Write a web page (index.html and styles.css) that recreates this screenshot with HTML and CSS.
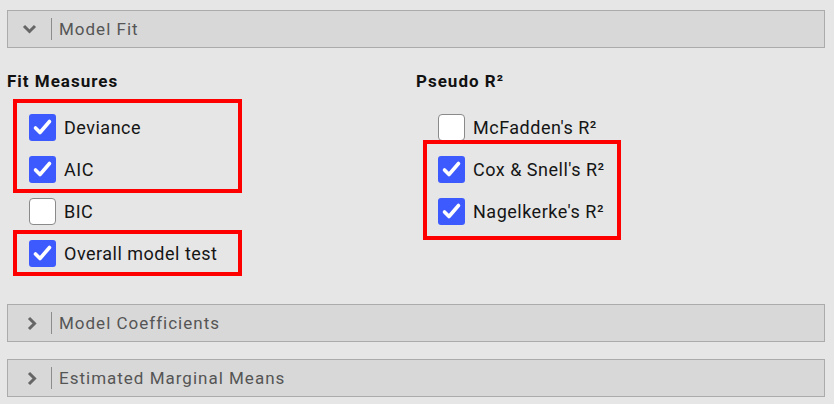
FILE: index.html
```html
<!DOCTYPE html>
<html>
<head>
<meta charset="utf-8">
<link rel="stylesheet" href="styles.css">
</head>
<body>
<div class="page">
  <section class="panel">
    <div class="panel-head">
      <span class="chev"><svg width="15" height="10" viewBox="0 0 15 10"><path d="M2 2 L7.5 7.5 L13 2" fill="none" stroke="#666" stroke-width="3"/></svg></span>
      <span class="sep"></span>
      <span class="title">Model Fit</span>
    </div>
    <div class="panel-body">
      <div class="col">
        <h3 class="heading">Fit Measures</h3>
        <div class="list">
          <div class="group hl hl-a">
            <div class="row"><span class="box on"><svg width="27" height="27" viewBox="0 0 27 27"><polyline points="6.5,14 11,18.5 20.5,7.5" fill="none" stroke="#fff" stroke-width="3.6" stroke-linecap="round" stroke-linejoin="round"/></svg></span><span class="label">Deviance</span></div>
            <div class="row"><span class="box on"><svg width="27" height="27" viewBox="0 0 27 27"><polyline points="6.5,14 11,18.5 20.5,7.5" fill="none" stroke="#fff" stroke-width="3.6" stroke-linecap="round" stroke-linejoin="round"/></svg></span><span class="label">AIC</span></div>
          </div>
          <div class="row"><span class="box off"></span><span class="label">BIC</span></div>
          <div class="group hl hl-b">
            <div class="row"><span class="box on"><svg width="27" height="27" viewBox="0 0 27 27"><polyline points="6.5,14 11,18.5 20.5,7.5" fill="none" stroke="#fff" stroke-width="3.6" stroke-linecap="round" stroke-linejoin="round"/></svg></span><span class="label">Overall model test</span></div>
          </div>
        </div>
      </div>
      <div class="col">
        <h3 class="heading">Pseudo R²</h3>
        <div class="list">
          <div class="row"><span class="box off"></span><span class="label">McFadden's R²</span></div>
          <div class="group hl hl-c">
            <div class="row"><span class="box on"><svg width="27" height="27" viewBox="0 0 27 27"><polyline points="6.5,14 11,18.5 20.5,7.5" fill="none" stroke="#fff" stroke-width="3.6" stroke-linecap="round" stroke-linejoin="round"/></svg></span><span class="label">Cox &amp; Snell's R²</span></div>
            <div class="row"><span class="box on"><svg width="27" height="27" viewBox="0 0 27 27"><polyline points="6.5,14 11,18.5 20.5,7.5" fill="none" stroke="#fff" stroke-width="3.6" stroke-linecap="round" stroke-linejoin="round"/></svg></span><span class="label">Nagelkerke's R²</span></div>
          </div>
        </div>
      </div>
    </div>
  </section>
  <section class="panel panel-closed panel-coef">
    <div class="panel-head">
      <span class="chev chev-right"><svg width="10" height="15" viewBox="0 0 10 15"><path d="M2 2 L7.5 7.5 L2 13" fill="none" stroke="#666" stroke-width="3"/></svg></span>
      <span class="sep"></span>
      <span class="title">Model Coefficients</span>
    </div>
  </section>
  <section class="panel panel-closed panel-emm">
    <div class="panel-head">
      <span class="chev chev-right"><svg width="10" height="15" viewBox="0 0 10 15"><path d="M2 2 L7.5 7.5 L2 13" fill="none" stroke="#666" stroke-width="3"/></svg></span>
      <span class="sep"></span>
      <span class="title">Estimated Marginal Means</span>
    </div>
  </section>
</div>
</body>
</html>
```

FILE: styles.css
```css
html, body {
  margin: 0;
  padding: 0;
  background: #e6e6e6;
  font-family: Roboto, "Liberation Sans", sans-serif;
}

.page {
  padding: 10px 9px 0 7px;
}

.panel-head {
  box-sizing: border-box;
  height: 38px;
  border: 1px solid #ababab;
  background: #d8d8d8;
  display: flex;
  align-items: center;
}

.chev {
  width: 43px;
  display: flex;
  justify-content: center;
  align-items: center;
}

.chev svg {
  display: block;
}

.chev-right svg {
  margin-left: 5px;
}

.sep {
  width: 1px;
  height: 22px;
  background: #8c8c8c;
}

.title {
  margin-left: 7px;
  font-size: 17px;
  letter-spacing: 1px;
  color: #555;
}

.panel-body {
  display: grid;
  grid-template-columns: 409px 1fr;
  margin-top: 23px;
}

.col {
  display: flex;
  flex-direction: column;
}

.heading {
  margin: 0;
  font-size: 17px;
  line-height: 20px;
  font-weight: 700;
  letter-spacing: 1px;
  color: #111;
}

.list {
  margin-top: 15px;
}

.row {
  height: 42px;
  display: flex;
  align-items: center;
  padding-left: 22px;
}

.box {
  box-sizing: border-box;
  width: 27px;
  height: 27px;
  border-radius: 3px;
  margin-right: 8px;
  flex: none;
}

.box svg {
  display: block;
}

.box.on {
  background: #3d5afe;
}

.box.off {
  background: #fff;
  border: 1px solid #8a8a8a;
  border-radius: 4px;
}

.label {
  font-size: 18px;
  letter-spacing: 0.5px;
  color: #151515;
}

.hl {
  position: relative;
}

.hl::after {
  content: "";
  position: absolute;
  border: 4px solid #ff0000;
  box-sizing: border-box;
  pointer-events: none;
}

.hl-a::after {
  top: -7px;
  bottom: -3px;
  left: 6px;
  width: 229px;
}

.hl-b::after {
  top: -2px;
  bottom: -2px;
  left: 6px;
  width: 229px;
}

.hl-c::after {
  top: -8px;
  bottom: -8px;
  left: 7px;
  width: 198px;
}

.panel-coef {
  margin-top: 30px;
}

.panel-emm {
  margin-top: 17px;
}
```
